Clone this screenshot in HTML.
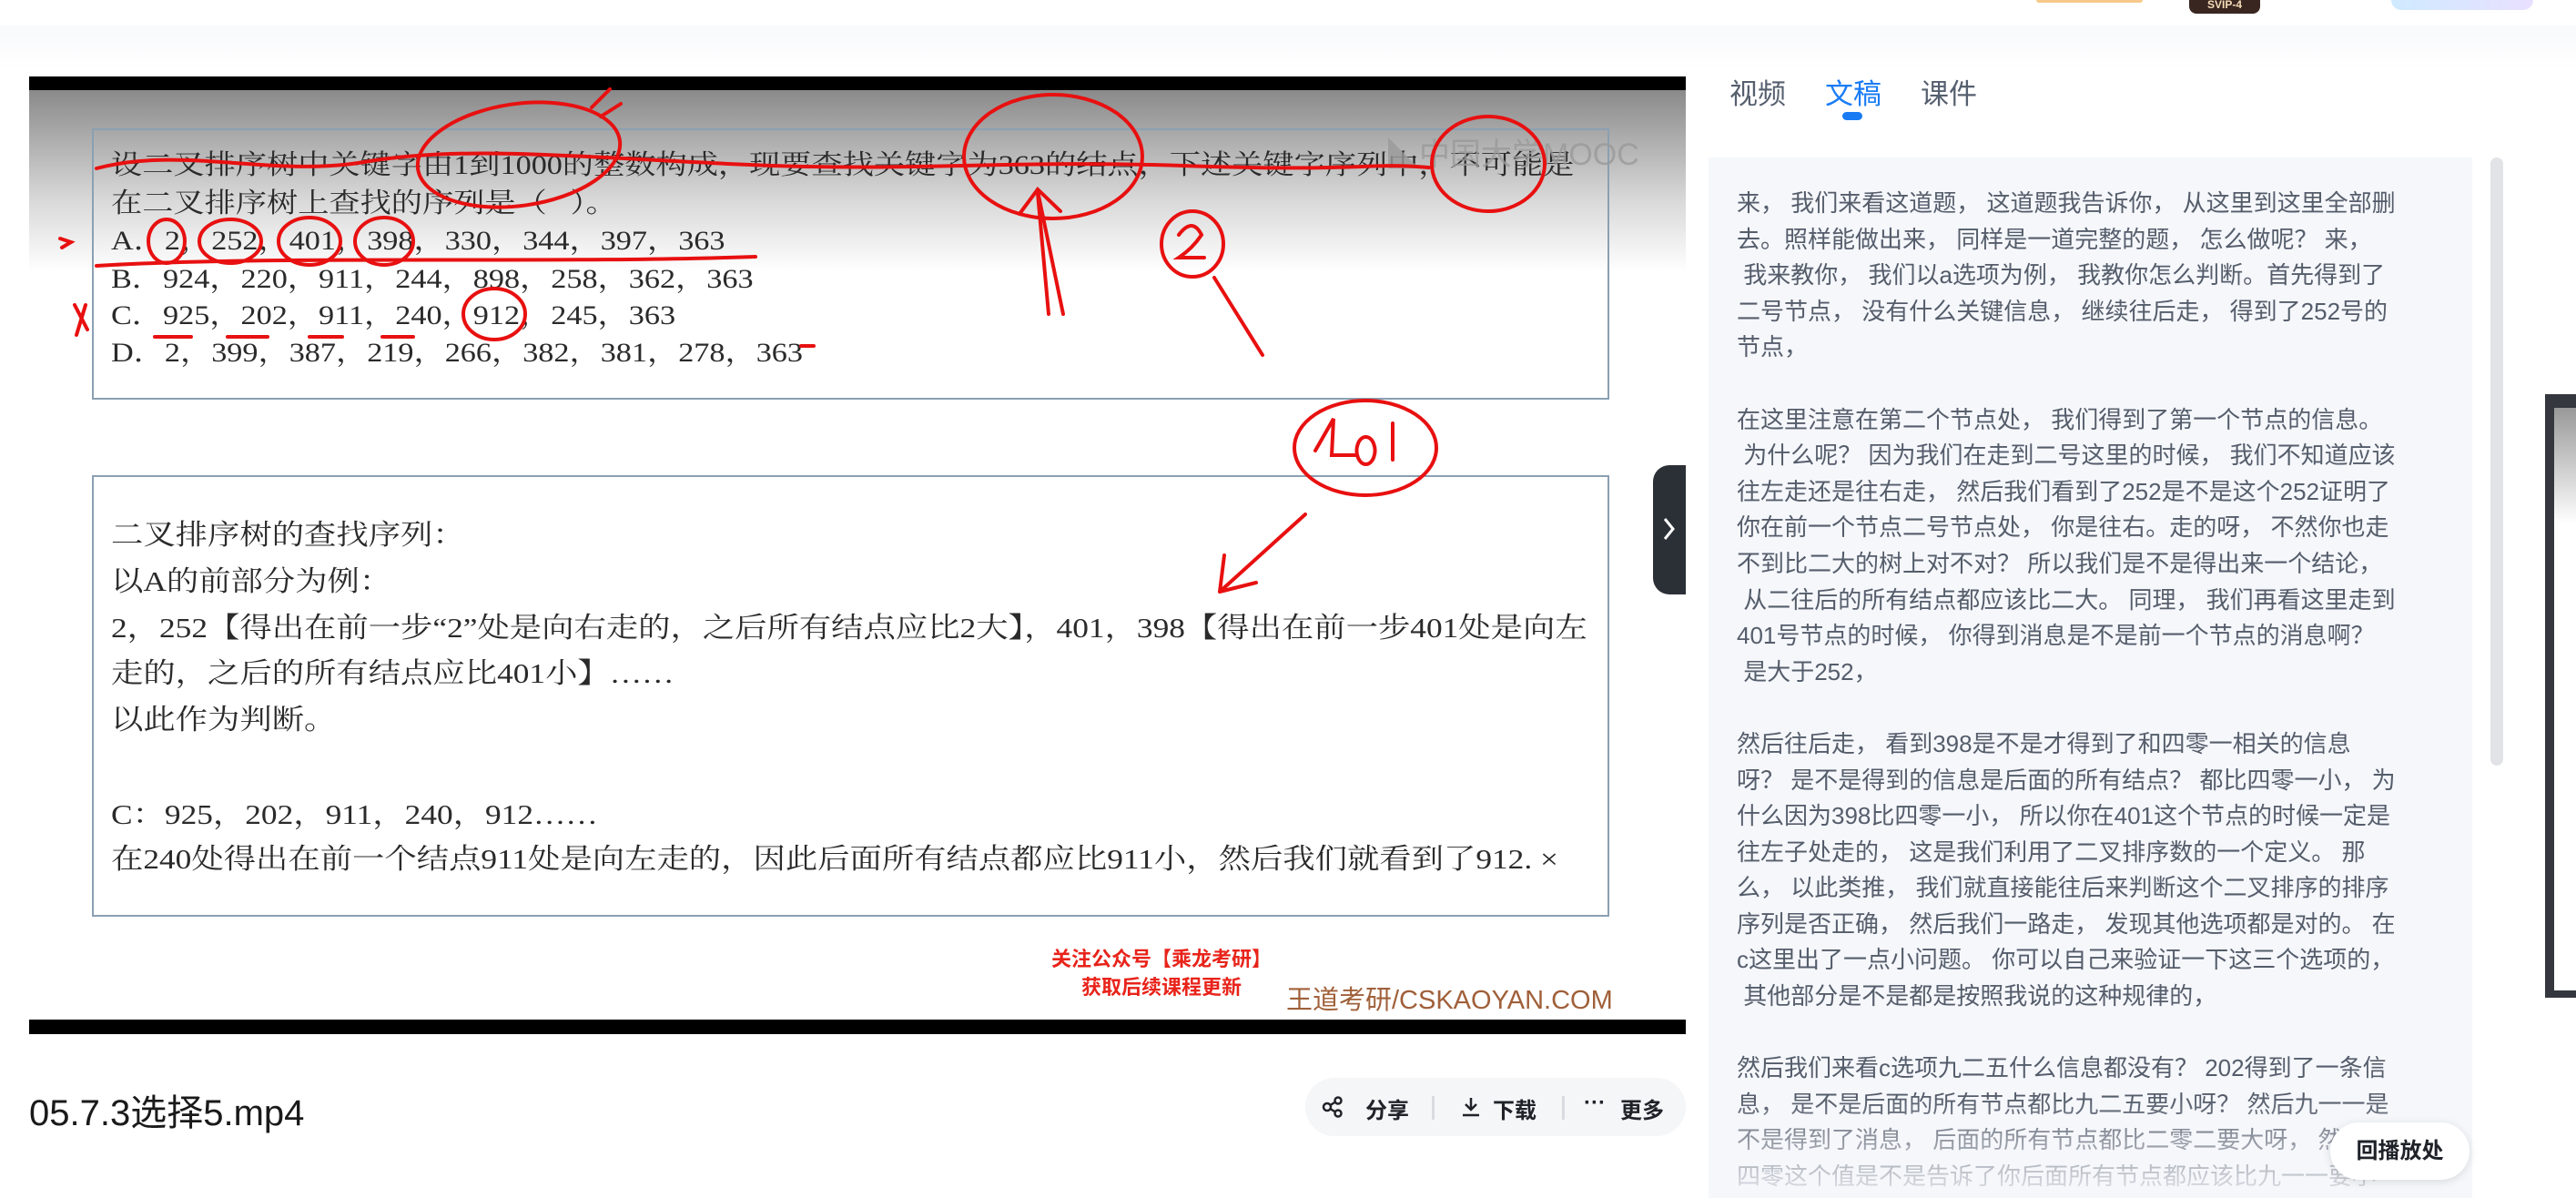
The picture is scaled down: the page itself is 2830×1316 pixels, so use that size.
<!DOCTYPE html>
<html><head><meta charset="utf-8">
<style>
*{margin:0;padding:0;box-sizing:border-box}
body{width:2830px;height:1316px;overflow:hidden;background:#fff;position:relative;font-family:"Liberation Sans","Noto Sans CJK SC",sans-serif}
.abs{position:absolute}
#band{left:0;top:28px;width:2830px;height:50px;background:linear-gradient(#f8f9fb,#fff)}
#video{left:32px;top:84px;width:1820px;height:1052px;background:#fff;overflow:hidden}
#video .topbar{position:absolute;left:0;top:0;width:100%;height:15px;background:#000}
#video .grad{position:absolute;left:0;top:15px;width:100%;height:200px;background:linear-gradient(#8a8a8a,#d8d8d8 60%,#fff)}
#video .botbar{position:absolute;left:0;bottom:0;width:100%;height:16px;background:#000}
.box{position:absolute;border:2px solid #8aa0b3}
.slide{font-family:"Liberation Serif","Noto Serif CJK SC",serif;color:#2a2a2a;white-space:nowrap}
.slide div{transform:scaleX(1.14);transform-origin:0 0}
.l1 div{position:absolute;left:90px;font-size:30px;line-height:40px}
.l2 div{position:absolute;left:90px;font-size:31px;line-height:44px}
#tabs div{position:absolute;top:78px;font-size:31px;color:#555f6e}
#tx{left:1877px;top:173px;width:839px;height:1143px;background:#f5f7fb;overflow:hidden}
#tx .t{position:absolute;left:31px;top:31px;font-size:26px;line-height:39.6px;color:#555d6b;white-space:pre}
#tx .fade{position:absolute;left:0;bottom:0;width:100%;height:110px;background:linear-gradient(rgba(245,247,251,0),rgba(245,247,251,.9))}
</style></head><body>
<div class="abs" id="band"></div>
<div class="abs" style="left:2237px;top:0;width:117px;height:3px;background:#f7c98a;border-radius:0 0 4px 4px"></div>
<div class="abs" style="left:2405px;top:0;width:78px;height:15px;background:#3a2620;border-radius:0 0 8px 8px;color:#f6dcb8;font-size:12px;line-height:10px;text-align:center;font-weight:bold">SVIP-4</div>
<div class="abs" style="left:2627px;top:0;width:156px;height:11px;background:linear-gradient(90deg,#cfeaff,#e8e0ff);border-radius:0 0 14px 14px"></div>

<div class="abs" id="video">
 <div class="topbar"></div><div class="grad"></div>
 <div class="box" style="left:69px;top:57px;width:1667px;height:298px"></div>
 <div class="box" style="left:69px;top:438px;width:1667px;height:485px"></div>
 <div class="slide l1">
  <div style="top:78px">设二叉排序树中关键字由1到1000的整数构成，现要查找关键字为363的结点，下述关键字序列中，不可能是</div>
  <div style="top:120px">在二叉排序树上查找的序列是（&nbsp;&nbsp;&nbsp;）。</div>
  <div style="top:161px">A．2，252，401，398，330，344，397，363</div>
  <div style="top:203px">B．924，220，911，244，898，258，362，363</div>
  <div style="top:243px">C．925，202，911，240，912，245，363</div>
  <div style="top:284px">D．2，399，387，219，266，382，381，278，363</div>
 </div>
 <div class="slide l2">
  <div style="top:482px">二叉排序树的查找序列：</div>
  <div style="top:533px">以A的前部分为例：</div>
  <div style="top:584px">2，252【得出在前一步“2”处是向右走的，之后所有结点应比2大】，401，398【得出在前一步401处是向左</div>
  <div style="top:634px">走的，之后的所有结点应比401小】……</div>
  <div style="top:685px">以此作为判断。</div>
  <div style="top:789px">C：925，202，911，240，912……</div>
  <div style="top:838px">在240处得出在前一个结点911处是向左走的，因此后面所有结点都应比911小，然后我们就看到了912. ×</div>
 </div>
 <div style="position:absolute;left:1493px;top:58px;font-size:34px;color:#9a9a9a;opacity:.8">◣中国大学MOOC</div>
 <div style="position:absolute;left:1123px;top:954px;font-size:22px;font-weight:bold;color:#e8231a;line-height:31px;text-align:center">关注公众号【乘龙考研】<br>获取后续课程更新</div>
 <div style="position:absolute;left:1381px;top:991px;font-size:29px;color:#a0603a">王道考研/CSKAOYAN.COM</div>
 <svg style="position:absolute;left:-32px;top:-84px" width="1852" height="1140" fill="none" stroke="#e81010" stroke-width="4" stroke-linecap="round">
  <path d="M106 185 C200 160 300 195 400 178 S600 170 800 180 S1100 175 1300 182 S1500 178 1570 184"/>
  <ellipse cx="570" cy="170" rx="112" ry="56" transform="rotate(-8 570 170)"/>
  <path d="M650 118 l20 -20 M660 128 l22 -14"/>
  <ellipse cx="1157" cy="172" rx="98" ry="68"/>
  <ellipse cx="1635" cy="180" rx="62" ry="52"/>
  <path d="M1168 345 L1140 210 M1152 345 L1140 212 M1120 235 L1140 208 L1165 232"/>
  <ellipse cx="1310" cy="268" rx="34" ry="36"/>
  <path d="M1295 258 q15 -20 25 0 q-10 15 -25 25 h28"/>
  <path d="M1334 305 L1387 390"/>
  <ellipse cx="183" cy="265" rx="20" ry="24"/><ellipse cx="253" cy="265" rx="34" ry="24"/>
  <ellipse cx="340" cy="265" rx="34" ry="26"/><ellipse cx="422" cy="265" rx="32" ry="26"/>
  <path d="M106 292 C300 280 600 290 830 282"/>
  <path d="M66 262 l12 4 l-10 6"/>
  <path d="M82 335 L96 362 M94 335 L84 368"/>
  <path d="M170 370 h40 M250 370 h44 M340 370 h36 M420 370 h34"/>
  <ellipse cx="543" cy="345" rx="34" ry="28"/>
  <path d="M880 380 h14"/>
  <ellipse cx="1500" cy="492" rx="78" ry="52"/>
  <path d="M1445 495 l20 -35 l-2 40 h28 M1500 480 a10 15 0 1 0 1 0 M1530 465 v40"/>
  <path d="M1434 565 L1340 650 M1340 650 L1345 610 M1340 650 L1380 640"/>
 </svg>
 <div class="botbar"></div>
</div>

<div class="abs" style="left:1816px;top:511px;width:36px;height:142px;background:#2b2f36;border-radius:18px 0 0 18px"></div>
<svg class="abs" style="left:1826px;top:566px" width="16" height="30" fill="none" stroke="#fff" stroke-width="3"><path d="M3 4 L12 15 L3 26"/></svg>

<div class="abs" style="left:32px;top:1190px;font-size:40px;color:#1a1a1a">05.7.3选择5.mp4</div>
<div class="abs" style="left:1434px;top:1184px;width:418px;height:64px;background:#f5f6f8;border-radius:32px;font-size:24px;font-weight:bold;color:#1f2329">
 <svg style="position:absolute;left:18px;top:20px" width="24" height="24" fill="none" stroke="#1f2329" stroke-width="2.5"><circle cx="6" cy="12" r="4"/><circle cx="18" cy="5" r="3.5"/><circle cx="18" cy="19" r="3.5"/><path d="M9.5 10 L15 6.5 M9.5 14 L15 17.5"/></svg>
 <span style="position:absolute;left:66px;top:16px">分享</span>
 <div style="position:absolute;left:139px;top:20px;width:3px;height:26px;background:#d8dbe0"></div>
 <svg style="position:absolute;left:170px;top:20px" width="24" height="24" fill="none" stroke="#1f2329" stroke-width="2.5"><path d="M12 2 V15 M6 9 L12 15 L18 9 M3 21 H21"/></svg>
 <span style="position:absolute;left:206px;top:16px">下载</span>
 <div style="position:absolute;left:282px;top:20px;width:3px;height:26px;background:#d8dbe0"></div>
 <span style="position:absolute;left:306px;top:14px">···</span>
 <span style="position:absolute;left:346px;top:16px">更多</span>
</div>

<div id="tabs">
 <div style="left:1900px">视频</div>
 <div style="left:2005px;color:#1a7cf5">文稿</div>
 <div style="left:2110px">课件</div>
</div>
<div class="abs" style="left:2024px;top:123px;width:22px;height:9px;border-radius:5px;background:#1a7cf5"></div>

<div class="abs" id="tx"><div class="t">来， 我们来看这道题， 这道题我告诉你， 从这里到这里全部删
去。照样能做出来， 同样是一道完整的题， 怎么做呢？ 来，
 我来教你， 我们以a选项为例， 我教你怎么判断。首先得到了
二号节点， 没有什么关键信息， 继续往后走， 得到了252号的
节点，

在这里注意在第二个节点处， 我们得到了第一个节点的信息。
 为什么呢？ 因为我们在走到二号这里的时候， 我们不知道应该
往左走还是往右走， 然后我们看到了252是不是这个252证明了
你在前一个节点二号节点处， 你是往右。走的呀， 不然你也走
不到比二大的树上对不对？ 所以我们是不是得出来一个结论，
 从二往后的所有结点都应该比二大。 同理， 我们再看这里走到
401号节点的时候， 你得到消息是不是前一个节点的消息啊？
 是大于252，

然后往后走， 看到398是不是才得到了和四零一相关的信息
呀？ 是不是得到的信息是后面的所有结点？ 都比四零一小， 为
什么因为398比四零一小， 所以你在401这个节点的时候一定是
往左子处走的， 这是我们利用了二叉排序数的一个定义。 那
么， 以此类推， 我们就直接能往后来判断这个二叉排序的排序
序列是否正确， 然后我们一路走， 发现其他选项都是对的。 在
c这里出了一点小问题。 你可以自己来验证一下这三个选项的，
 其他部分是不是都是按照我说的这种规律的，

然后我们来看c选项九二五什么信息都没有？ 202得到了一条信
息， 是不是后面的所有节点都比九二五要小呀？ 然后九一一是
不是得到了消息， 后面的所有节点都比二零二要大呀， 然后二
四零这个值是不是告诉了你后面所有节点都应该比九一一要小</div><div class="fade"></div></div>
<div class="abs" style="left:2736px;top:173px;width:14px;height:668px;background:#e2e3e6;border-radius:7px"></div>
<div class="abs" style="left:2560px;top:1233px;width:153px;height:63px;background:#fff;border-radius:32px;box-shadow:0 2px 10px rgba(0,0,0,.12);font-size:24px;font-weight:bold;color:#1f2329;text-align:center;line-height:63px">回播放处</div>
<div class="abs" style="left:2796px;top:433px;width:34px;height:663px;background:#34383e"></div>
<div class="abs" style="left:2806px;top:448px;width:24px;height:640px;background:linear-gradient(#999,#fff 20%)"></div>
</body></html>
